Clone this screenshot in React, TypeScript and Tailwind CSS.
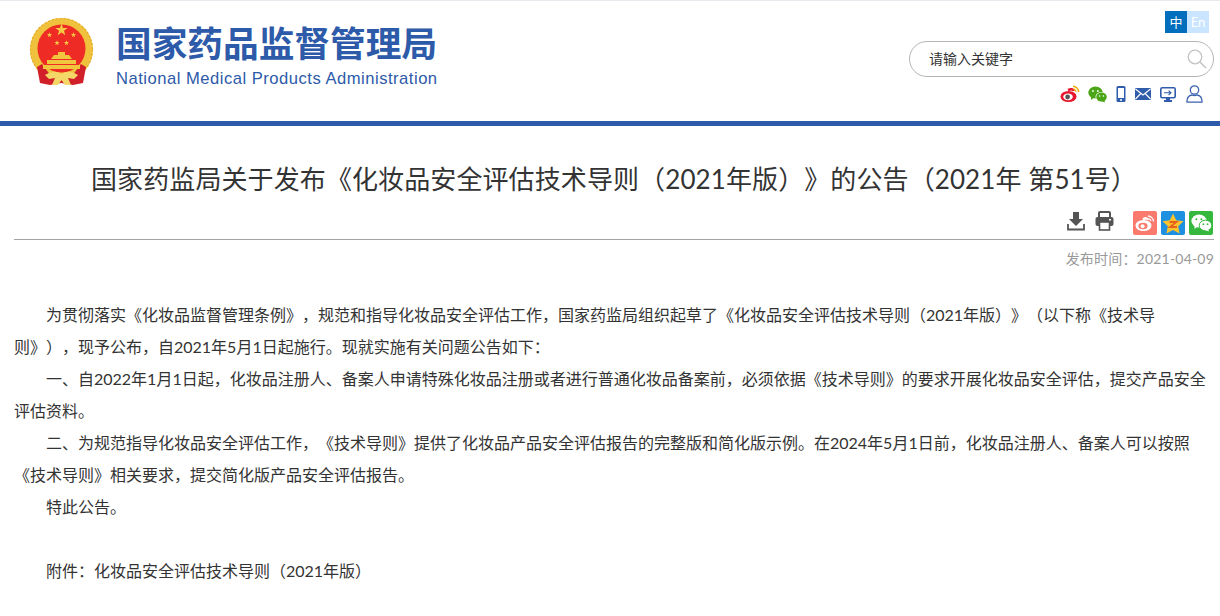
import React from "react";

const FONT = "font-['Microsoft_YaHei','Lato','Noto_Sans_CJK_SC','Liberation_Sans',sans-serif] [text-spacing-trim:space-all]";

function Emblem() {
  const star = (cx: number, cy: number, r: number) => {
    const pts: string[] = [];
    for (let i = 0; i < 10; i++) {
      const a = -Math.PI / 2 + (i * Math.PI) / 5;
      const rr = i % 2 === 0 ? r : r * 0.4;
      pts.push(`${cx + rr * Math.cos(a)},${cy + rr * Math.sin(a)}`);
    }
    return <polygon points={pts.join(" ")} fill="#f6c945" />;
  };
  return (
    <svg width="66" height="70" viewBox="0 0 66 70">
      <circle cx="32.5" cy="32.5" r="31.5" fill="#f0c13c" />
      <circle cx="32.5" cy="32.5" r="31" fill="none" stroke="#e3ad2a" strokeWidth="1.2" strokeDasharray="2 2" />
      <circle cx="32.5" cy="31.5" r="24" fill="#ee2b24" />
      <path d="M8 50 L13 47 L22 59 L32 62 L43 59 L52 47 L57 50 L54 66 L44 68 L32 66 L21 68 L11 66 Z" fill="#d1202a" />
      {star(32.5, 13, 6.5)}
      {star(20.5, 18, 2.8)}
      {star(44.5, 18, 2.8)}
      {star(28, 26, 2.8)}
      {star(37.5, 26, 2.8)}
      <path d="M22 42 L43 42 L40 38 L36 38 L36 35 L29 35 L29 38 L25 38 Z" fill="#f2c53f" />
      <rect x="18" y="43" width="29" height="4" fill="#f2c53f" />
      <rect x="14" y="48" width="37" height="4" fill="#f2c53f" />
      <path d="M16 58 Q25 52 32.5 57 Q40 52 49 58 L45 62 L39 61 L42 68 L36 68 L32.5 63 L29 68 L23 68 L26 61 L20 62 Z" fill="#f4d766" />
    </svg>
  );
}

function Weibo() {
  return (
    <svg width="20" height="18" viewBox="0 0 20 18">
      <ellipse cx="8.5" cy="11.5" rx="8" ry="5.5" fill="#e6162d" />
      <path d="M8 5 Q13 3 13.5 6" stroke="#e6162d" strokeWidth="2.5" fill="none" />
      <ellipse cx="8" cy="11.8" rx="4.8" ry="3.4" fill="#fff" />
      <circle cx="7.6" cy="12" r="2.4" fill="#555" />
      <path d="M13 1.2 A6 6 0 0 1 18.6 7" stroke="#f5a800" strokeWidth="1.6" fill="none" />
      <path d="M13.4 4 A3 3 0 0 1 15.8 6.8" stroke="#f5a800" strokeWidth="1.3" fill="none" />
    </svg>
  );
}

function Wechat() {
  return (
    <svg width="20" height="17" viewBox="0 0 20 17">
      <ellipse cx="7.5" cy="6.5" rx="7.2" ry="6" fill="#4aa616" />
      <path d="M3 10 L3 14 L7 11 Z" fill="#4aa616" />
      <ellipse cx="13.5" cy="11" rx="6" ry="5" fill="#fff" />
      <ellipse cx="13.5" cy="11" rx="5.3" ry="4.5" fill="#4aa616" />
      <path d="M16 14 L17 16.5 L13 15 Z" fill="#4aa616" />
      <circle cx="5" cy="5" r="0.9" fill="#fff" />
      <circle cx="9.8" cy="5" r="0.9" fill="#fff" />
      <circle cx="11.6" cy="10" r="0.8" fill="#fff" />
      <circle cx="15.4" cy="10" r="0.8" fill="#fff" />
    </svg>
  );
}

function Phone() {
  return (
    <svg width="10" height="16" viewBox="0 0 10 16">
      <rect x="0.5" y="0" width="9" height="16" rx="1.5" fill="#2f5cab" />
      <rect x="2" y="2" width="6" height="10" fill="#fff" />
      <circle cx="5" cy="14" r="1" fill="#fff" />
    </svg>
  );
}

function Mail() {
  return (
    <svg width="16" height="12" viewBox="0 0 16 12">
      <rect width="16" height="12" rx="1" fill="#2f5cab" />
      <path d="M0.5 1 L8 7 L15.5 1 M0.5 11 L5.8 5.5 M15.5 11 L10.2 5.5" stroke="#fff" strokeWidth="1.1" fill="none" />
    </svg>
  );
}

function Screen() {
  return (
    <svg width="16" height="15" viewBox="0 0 16 15">
      <rect x="0.8" y="0.8" width="14.4" height="10" rx="1.5" fill="#fff" stroke="#2f5cab" strokeWidth="1.6" />
      <path d="M4 5.8 H11 M8.6 3.6 L11 5.8 L8.6 8" stroke="#2f5cab" strokeWidth="1.1" fill="none" />
      <rect x="6" y="11" width="4" height="2.4" fill="#2f5cab" />
      <rect x="4" y="13" width="8" height="2" fill="#2f5cab" />
    </svg>
  );
}

function User() {
  return (
    <svg width="17" height="18" viewBox="0 0 17 18">
      <circle cx="8.5" cy="5" r="4.2" fill="none" stroke="#3b62ad" strokeWidth="1.3" />
      <path d="M1 17.2 Q0.6 10.8 6 10 Q8.5 11 11 10 Q16.4 10.8 16 17.2 Z" fill="none" stroke="#3b62ad" strokeWidth="1.3" />
    </svg>
  );
}

function Download() {
  return (
    <svg width="18" height="20" viewBox="0 0 18 20">
      <path d="M6 1 H12 V8 H16 L9 15 L2 8 H6 Z" fill="#555" />
      <path d="M1 13 V18.5 H17 V13" stroke="#555" strokeWidth="1.8" fill="none" />
    </svg>
  );
}

function Printer() {
  return (
    <svg width="19" height="20" viewBox="0 0 19 20">
      <path d="M4 6 V2 Q4 1 5 1 H14 Q15 1 15 2 V6" stroke="#555" strokeWidth="2" fill="none" />
      <rect x="0.5" y="6" width="18" height="9" rx="2" fill="#555" />
      <rect x="4.5" y="11" width="10" height="8" fill="#fff" stroke="#555" strokeWidth="1.6" />
      <rect x="14" y="8" width="2" height="1.5" fill="#fff" />
    </svg>
  );
}

function ShareWeibo() {
  return (
    <div className="w-6 h-6 rounded-[2px] bg-[#fa7a6e] flex items-center justify-center">
      <svg width="20" height="17" viewBox="0 0 20 17">
        <ellipse cx="8.5" cy="10.5" rx="8" ry="5.5" fill="#fff" />
        <path d="M8 4.5 Q12 2 13 5" stroke="#fff" strokeWidth="2.5" fill="none" />
        <ellipse cx="8" cy="11" rx="4.6" ry="3.2" fill="#fa7a6e" />
        <circle cx="7.6" cy="11.2" r="2" fill="#fff" />
        <path d="M13 1 A6 6 0 0 1 18.6 6.5 M13.4 3.6 A3 3 0 0 1 15.8 6" stroke="#fff" strokeWidth="1.4" fill="none" />
      </svg>
    </div>
  );
}

function ShareQzone() {
  return (
    <div className="w-6 h-6 rounded-[2px] bg-[#1f8fe0] flex items-center justify-center">
      <svg width="22" height="21" viewBox="0 0 22 21">
        <polygon points="11,0.5 14.2,7.2 21.5,8.2 16.2,13.2 17.6,20.5 11,17 4.4,20.5 5.8,13.2 0.5,8.2 7.8,7.2" fill="#fbc42c" />
        <path d="M7.5 9 H14.5 L8 14 H15" stroke="#e8601c" strokeWidth="1.8" fill="none" />
      </svg>
    </div>
  );
}

function ShareWechat() {
  return (
    <div className="w-6 h-6 rounded-[2px] bg-[#36b83f] flex items-center justify-center">
      <svg width="21" height="18" viewBox="0 0 21 18">
        <ellipse cx="8" cy="7" rx="7.6" ry="6.4" fill="#fff" />
        <path d="M3.5 11 L3.5 15 L7.5 12 Z" fill="#fff" />
        <ellipse cx="14.5" cy="11.5" rx="6.3" ry="5.3" fill="#fff" stroke="#36b83f" strokeWidth="1" />
        <path d="M17 15 L18 17.5 L14 16 Z" fill="#fff" />
        <circle cx="5.4" cy="5.2" r="1" fill="#36b83f" />
        <circle cx="10.4" cy="5.2" r="1" fill="#36b83f" />
        <circle cx="12.4" cy="10.2" r="0.9" fill="#36b83f" />
        <circle cx="16.6" cy="10.2" r="0.9" fill="#36b83f" />
      </svg>
    </div>
  );
}

export default function App() {
  return (
    <div className={`w-[1220px] h-[616px] overflow-hidden bg-white ${FONT}`}>
      {/* header */}
      <header className="h-[126px] border-t border-t-[#e6eaef] border-b-[5px] border-b-[#2d5aa9] flex justify-between">
        <div className="flex pl-[29px] pt-[16px]">
          <Emblem />
          <div className="ml-[21px] pt-[4px] text-[#2d5aa9]">
            <div className="text-[35.7px] leading-[46px] font-bold whitespace-nowrap">国家药品监督管理局</div>
            <div className="text-[16.6px] leading-[20px] mt-[2px] tracking-[0.5px] font-['Liberation_Sans'] whitespace-nowrap">National Medical Products Administration</div>
          </div>
        </div>
        <div className="w-[311px] mr-[6px] pt-[10px] flex flex-col items-end">
          <div className="flex text-[13px] leading-[22px] text-white text-center mr-[5px]">
            <span className="w-[22px] h-[22px] bg-[#006ebd]">中</span>
            <span className="w-[22px] h-[22px] bg-[#c9e5ff]">En</span>
          </div>
          <div className="mt-[8px] w-[305px] h-[36px] border border-[#b5b5b5] rounded-[18px] flex items-center justify-between pl-[19px] pr-[6px] text-[14px] leading-[20px] text-[#333]">
            <span className="-mt-[1px]">请输入关键字</span>
            <svg width="20" height="20" viewBox="0 0 20 20">
              <circle cx="8" cy="8" r="6.8" fill="none" stroke="#c4c4c4" strokeWidth="1.3" />
              <path d="M13 13 L19 19" stroke="#c4c4c4" strokeWidth="1.5" />
            </svg>
          </div>
          <div className="mt-[7px] flex items-center pr-[11px] h-[20px]">
            <Weibo />
            <span className="ml-[8px]"><Wechat /></span>
            <span className="ml-[8px]"><Phone /></span>
            <span className="ml-[9px]"><Mail /></span>
            <span className="ml-[9px]"><Screen /></span>
            <span className="ml-[10px]"><User /></span>
          </div>
        </div>
      </header>

      {/* article */}
      <main className="pl-[14px] pr-[6px]">
        <h1 className="mt-[33px] text-center text-[26px] leading-[40px] font-normal tracking-[0.1px] text-[#333] whitespace-nowrap">
          国家药监局关于发布《化妆品安全评估技术导则（2021年版）》的公告（2021年 第51号）
        </h1>
        <div className="mt-[11px] h-[30px] border-b border-[#a3a3a3] flex justify-end items-start pt-[1px] pr-[1px]">
          <Download />
          <span className="ml-[10px]"><Printer /></span>
          <span className="ml-[19px]"><ShareWeibo /></span>
          <span className="ml-[4px]"><ShareQzone /></span>
          <span className="ml-[4px]"><ShareWechat /></span>
        </div>
        <div className="mt-[9px] text-right text-[14px] leading-[20px] tracking-[0.2px] text-[#999]">发布时间：2021-04-09</div>
        <div className="mt-[30px] text-[16px] leading-[32px] text-[#333]">
          <p className="indent-[32px] pr-[40px]">为贯彻落实《化妆品监督管理条例》，规范和指导化妆品安全评估工作，国家药监局组织起草了《化妆品安全评估技术导则（2021年版）》（以下称《技术导则》），现予公布，自2021年5月1日起施行。现就实施有关问题公告如下：</p>
          <p className="indent-[32px]">一、自2022年1月1日起，化妆品注册人、备案人申请特殊化妆品注册或者进行普通化妆品备案前，必须依据《技术导则》的要求开展化妆品安全评估，提交产品安全评估资料。</p>
          <p className="indent-[32px]">二、为规范指导化妆品安全评估工作，《技术导则》提供了化妆品产品安全评估报告的完整版和简化版示例。在2024年5月1日前，化妆品注册人、备案人可以按照《技术导则》相关要求，提交简化版产品安全评估报告。</p>
          <p className="indent-[32px]">特此公告。</p>
          <p className="h-[32px]"></p>
          <p className="indent-[32px]">附件：化妆品安全评估技术导则（2021年版）</p>
        </div>
      </main>
    </div>
  );
}
